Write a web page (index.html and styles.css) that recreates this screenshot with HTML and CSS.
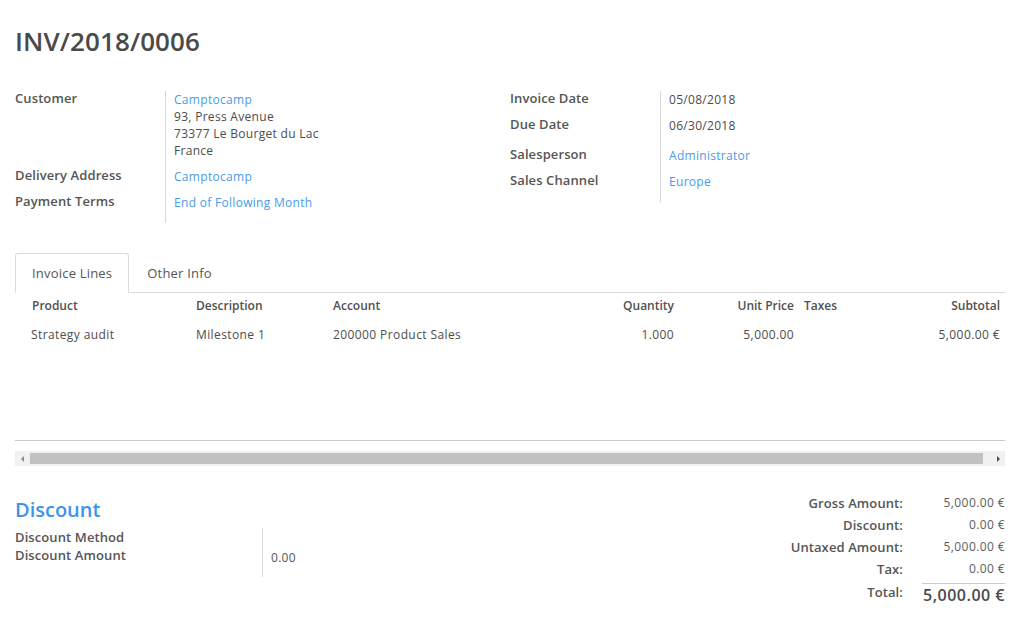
FILE: index.html
```html
<!DOCTYPE html>
<html>
<head>
<meta charset="utf-8">
<link rel="stylesheet" href="styles.css">
</head>
<body>
<div class="sheet">
  <h1 class="title">INV/2018/0006</h1>

  <div class="groups">
    <div class="group">
      <div class="lbl">Customer</div>
      <div class="val">
        <a class="link">Camptocamp</a>
        <div>93, Press Avenue</div>
        <div>73377 Le Bourget du Lac</div>
        <div>France</div>
      </div>
      <div class="lbl">Delivery Address</div>
      <div class="val"><a class="link">Camptocamp</a></div>
      <div class="lbl last">Payment Terms</div>
      <div class="val last"><a class="link">End of Following Month</a></div>
    </div>
    <div class="group">
      <div class="lbl">Invoice Date</div>
      <div class="val">05/08/2018</div>
      <div class="lbl tall">Due Date</div>
      <div class="val tall">06/30/2018</div>
      <div class="lbl">Salesperson</div>
      <div class="val"><a class="link">Administrator</a></div>
      <div class="lbl last">Sales Channel</div>
      <div class="val last"><a class="link">Europe</a></div>
    </div>
  </div>

  <div class="tabs">
    <div class="tab active">Invoice Lines</div>
    <div class="tab">Other Info</div>
    <div class="tab-rest"></div>
  </div>

  <div class="lines">
    <table class="grid">
      <colgroup>
        <col class="c-product"><col class="c-desc"><col class="c-account"><col class="c-qty"><col class="c-price"><col class="c-taxes"><col class="c-sub">
      </colgroup>
      <thead>
        <tr>
          <th class="first">Product</th>
          <th>Description</th>
          <th>Account</th>
          <th class="num">Quantity</th>
          <th class="num">Unit Price</th>
          <th>Taxes</th>
          <th class="num">Subtotal</th>
        </tr>
      </thead>
      <tbody>
        <tr>
          <td class="first">Strategy audit</td>
          <td>Milestone 1</td>
          <td>200000 Product Sales</td>
          <td class="num">1.000</td>
          <td class="num">5,000.00</td>
          <td></td>
          <td class="num">5,000.00 €</td>
        </tr>
      </tbody>
    </table>
  </div>

  <div class="hscroll">
    <span class="arrow left"></span>
    <div class="thumb"></div>
    <span class="arrow right"></span>
  </div>

  <div class="bottom">
    <div class="discount">
      <h2 class="subtitle">Discount</h2>
      <div class="dgroup">
        <div class="dlbl">Discount Method</div>
        <div class="dval"></div>
        <div class="dlbl">Discount Amount</div>
        <div class="dval amount">0.00</div>
      </div>
    </div>
    <div class="totals">
      <div class="tl">Gross Amount:</div><div class="tv">5,000.00 €</div>
      <div class="tl">Discount:</div><div class="tv">0.00 €</div>
      <div class="tl">Untaxed Amount:</div><div class="tv">5,000.00 €</div>
      <div class="tl">Tax:</div><div class="tv">0.00 €</div>
      <div class="tl total">Total:</div><div class="tv total">5,000.00 €</div>
    </div>
  </div>
</div>
</body>
</html>
```

FILE: styles.css
```css
html, body {
  margin: 0;
  padding: 0;
  background: #ffffff;
}

body {
  font-family: "Open Sans", "Liberation Sans", sans-serif;
  color: #4c4c4c;
  font-size: 12px;
}

.sheet {
  padding: 26px 14px 0 15px;
}

.title {
  margin: 0;
  font-size: 26px;
  line-height: 30px;
  font-weight: 600;
  letter-spacing: 0.1px;
  color: #4a4a4a;
}

.groups {
  display: grid;
  grid-template-columns: 495px 495px;
  margin-top: 35px;
}

.group {
  display: grid;
  grid-template-columns: 150px 1fr;
  align-content: start;
}

.lbl {
  font-size: 13px;
  font-weight: 600;
  letter-spacing: 0.1px;
  line-height: 17px;
  padding-bottom: 9px;
  margin-top: -1px;
  color: #555555;
}

.val {
  border-left: 1px solid #d9d9d9;
  padding-left: 8px;
  line-height: 17px;
  padding-bottom: 9px;
  font-size: 12px;
  letter-spacing: 0.3px;
}

.lbl.tall, .val.tall { padding-bottom: 13px; }
.lbl.last, .val.last { padding-bottom: 12px; }

.link {
  display: block;
  color: #4a9be6;
  text-decoration: none;
}

.tabs {
  display: flex;
  margin-top: 30px;
  height: 40px;
}

.tab {
  padding: 0 16px;
  line-height: 38px;
  font-size: 13px;
  letter-spacing: 0.2px;
  color: #555555;
  border: 1px solid transparent;
  border-bottom: 1px solid #dcdcdc;
}

.tab.active {
  border-color: #dcdcdc;
  border-bottom-color: transparent;
  border-radius: 3px 3px 0 0;
}

.tab + .tab {
  padding-left: 17px;
}

.tab-rest {
  flex: 1;
  border-bottom: 1px solid #dcdcdc;
}

.lines {
  height: 147px;
  border-bottom: 1px solid #cccccc;
}

.grid {
  width: 990px;
  border-collapse: collapse;
  table-layout: fixed;
}

.c-product { width: 176px; }
.c-desc { width: 137px; }
.c-account { width: 252px; }
.c-qty { width: 99px; }
.c-price { width: 120px; }
.c-taxes { width: 81px; }
.c-sub { width: 125px; }

.grid th, .grid td {
  padding: 0 5px;
  text-align: left;
  white-space: nowrap;
}

.grid th {
  font-weight: 600;
  height: 25px;
  font-size: 12px;
  color: #505050;
  vertical-align: top;
  line-height: 25px;
}

.grid td {
  height: 32px;
  font-size: 12px;
  letter-spacing: 0.4px;
}

.grid .first { padding-left: 17px; }
.grid td.first { padding-left: 16px; }
.grid .num { text-align: right; }

.hscroll {
  display: flex;
  align-items: center;
  margin-top: 10px;
  height: 15px;
  background: #f1f1f1;
}

.thumb {
  flex: 1;
  height: 11px;
  background: #c1c1c1;
  margin: 0 14px 0 6px;
}

.arrow {
  width: 0;
  height: 0;
  border-top: 3px solid transparent;
  border-bottom: 3px solid transparent;
}

.arrow.left {
  margin-left: 6px;
  border-right: 3px solid #8a8a8a;
}

.arrow.right {
  margin-right: 5px;
  border-left: 3px solid #505050;
}

.bottom {
  display: flex;
  justify-content: space-between;
  margin-top: 29px;
}

.discount {
  width: 495px;
}

.subtitle {
  margin: 0;
  font-size: 20px;
  line-height: 26px;
  font-weight: 600;
  color: #3d95e8;
  padding-top: 2px;
}

.dgroup {
  display: grid;
  grid-template-columns: 247px 1fr;
  margin-top: 5px;
}

.dlbl {
  font-size: 13px;
  font-weight: 600;
  letter-spacing: 0.1px;
  line-height: 18px;
  color: #555555;
}

.dval {
  border-left: 1px solid #d9d9d9;
  padding-left: 8px;
  line-height: 18px;
}

.dval.amount {
  padding-top: 3px;
  padding-bottom: 10px;
  font-size: 12px;
  letter-spacing: 0.3px;
  color: #555555;
}

.totals {
  display: grid;
  grid-template-columns: auto 83px;
  column-gap: 19px;
  align-content: start;
  margin-top: -3px;
}

.tl {
  text-align: right;
  font-size: 13px;
  font-weight: 600;
  letter-spacing: 0.1px;
  line-height: 22px;
  color: #555555;
}

.tv {
  text-align: right;
  font-size: 12px;
  line-height: 22px;
  letter-spacing: 0.4px;
  color: #5c5c5c;
}

.tl.total {
  margin-top: 1px;
}

.tv.total {
  border-top: 1px solid #cccccc;
  margin-top: 3px;
  font-size: 16px;
  font-weight: 600;
  letter-spacing: 0.5px;
  color: #4a4a4a;
  line-height: 22px;
}
```
